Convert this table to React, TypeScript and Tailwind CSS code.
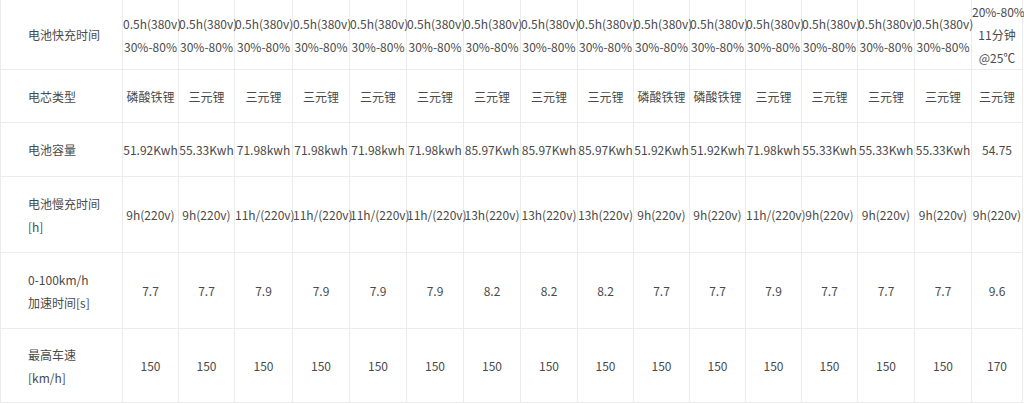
import React from 'react'

const colWidths = [122, 56, 56, 58, 57, 57, 57, 57, 57, 56, 56, 56, 56, 56, 57, 57, 51]

type Row = {
  label: React.ReactNode
  height: number
  cells: React.ReactNode[]
}

const fast = (
  <>
    0.5h(380v)
    <br />
    30%-80%
  </>
)

const rows: Row[] = [
  {
    label: '电池快充时间',
    height: 68,
    cells: [
      ...Array(15).fill(fast),
      <>
        20%-80%
        <br />
        11分钟
        <br />
        @25℃
      </>,
    ],
  },
  {
    label: '电芯类型',
    height: 53,
    cells: [
      '磷酸铁锂', '三元锂', '三元锂', '三元锂', '三元锂', '三元锂', '三元锂', '三元锂',
      '三元锂', '磷酸铁锂', '磷酸铁锂', '三元锂', '三元锂', '三元锂', '三元锂', '三元锂',
    ],
  },
  {
    label: '电池容量',
    height: 54,
    cells: [
      '51.92Kwh', '55.33Kwh', '71.98kwh', '71.98kwh', '71.98kwh', '71.98kwh', '85.97Kwh', '85.97Kwh',
      '85.97Kwh', '51.92Kwh', '51.92Kwh', '71.98kwh', '55.33Kwh', '55.33Kwh', '55.33Kwh', '54.75',
    ],
  },
  {
    label: (
      <>
        电池慢充时间
        <br />
        [h]
      </>
    ),
    height: 76,
    cells: [
      '9h(220v)', '9h(220v)', '11h/(220v)', '11h/(220v)', '11h/(220v)', '11h/(220v)', '13h(220v)', '13h(220v)',
      '13h(220v)', '9h(220v)', '9h(220v)', '11h/(220v)', '9h(220v)', '9h(220v)', '9h(220v)', '9h(220v)',
    ],
  },
  {
    label: (
      <>
        0-100km/h
        <br />
        加速时间[s]
      </>
    ),
    height: 76,
    cells: ['7.7', '7.7', '7.9', '7.9', '7.9', '7.9', '8.2', '8.2', '8.2', '7.7', '7.7', '7.9', '7.7', '7.7', '7.7', '9.6'],
  },
  {
    label: (
      <>
        最高车速
        <br />
        [km/h]
      </>
    ),
    height: 74,
    cells: ['150', '150', '150', '150', '150', '150', '150', '150', '150', '150', '150', '150', '150', '150', '150', '170'],
  },
]

export default function App() {
  return (
    <div className="w-[1024px] h-[404px] bg-white overflow-hidden font-['Noto_Sans_CJK_SC','Noto_Sans',sans-serif] text-[12px] leading-[23px] text-[#4a4a4a]">
      <table className="table-fixed border-collapse w-[1022px] -mt-px">
        <colgroup>
          {colWidths.map((w, i) => (
            <col key={i} style={{ width: w }} />
          ))}
        </colgroup>
        <tbody>
          {rows.map((row, r) => (
            <tr key={r} style={{ height: row.height }}>
              <td className="border border-[#ececec] pl-[27px] pr-1 text-left align-middle whitespace-nowrap">
                {row.label}
              </td>
              {row.cells.map((c, i) => (
                <td
                  key={i}
                  className="border border-[#ececec] p-0 text-center align-middle whitespace-nowrap"
                >
                  {c}
                </td>
              ))}
            </tr>
          ))}
        </tbody>
      </table>
    </div>
  )
}
